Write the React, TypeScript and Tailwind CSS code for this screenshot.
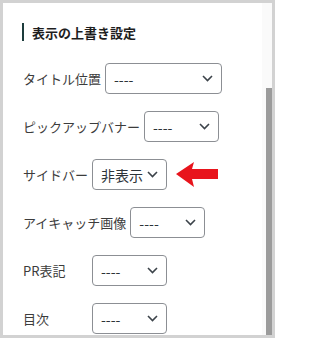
import React from "react"

const rows = [
  { label: "タイトル位置", value: "----", width: "w-[117px]" },
  { label: "ピックアップバナー", value: "----", width: "w-[75px]" },
  { label: "サイドバー", value: "非表示", width: "w-[75px]", arrow: true },
  { label: "アイキャッチ画像", value: "----", width: "w-[75px]" },
  { label: "PR表記", value: "----", width: "w-[75px]" },
  { label: "目次", value: "----", width: "w-[75px]" },
]

function Chevron() {
  return (
    <svg width="11" height="7" viewBox="0 0 11 7" className="shrink-0">
      <polyline points="1,1 5.5,5.5 10,1" fill="none" stroke="#3c434a" strokeWidth="1.6" />
    </svg>
  )
}

function RedArrow() {
  return (
    <svg width="42" height="26" viewBox="0 0 42 26" className="ml-[9px] shrink-0">
      <polygon points="0,12 18,0 16,7 42,7 42,17 16,17 18,25" fill="#e8141c" />
    </svg>
  )
}

export default function App() {
  return (
    <div
      className="w-[275px] h-[338px] border-[3px] border-[#d2d2d2] bg-white flex overflow-hidden"
      style={{ fontFamily: '"Noto Sans CJK JP", "Noto Sans", sans-serif' }}
    >
      <div className="flex-1 pl-[20px] pt-[20px]">
        {/* heading */}
        <div className="flex items-center h-[18px] border-l-[2.5px] border-[#1d3c3c] pl-[8px] ml-[-1px]">
          <span className="text-[13px] font-bold text-[#1e1e1e] leading-none">表示の上書き設定</span>
        </div>

        <div className="mt-[22px] flex flex-col gap-[17px]">
          {rows.map((row) => (
            <div key={row.label} className="flex items-center">
              <span className="min-w-[65px] mr-[4px] text-[13px] text-[#3c3c3c] whitespace-nowrap">
                {row.label}
              </span>
              <div
                className={`${row.width} h-[31px] shrink-0 border border-[#8c8f94] rounded-[4px] flex items-center justify-between pl-[8px] pr-[8px]`}
              >
                <span className="text-[14px] text-[#2c3338] leading-none">{row.value}</span>
                <Chevron />
              </div>
              {row.arrow && <RedArrow />}
            </div>
          ))}
        </div>
      </div>

      {/* scrollbar */}
      <div className="w-[10px] bg-[#fafafa] flex flex-col items-end">
        <div className="w-[6px] mt-[85px] flex-1 bg-[#9b9b9b]" />
      </div>
    </div>
  )
}
